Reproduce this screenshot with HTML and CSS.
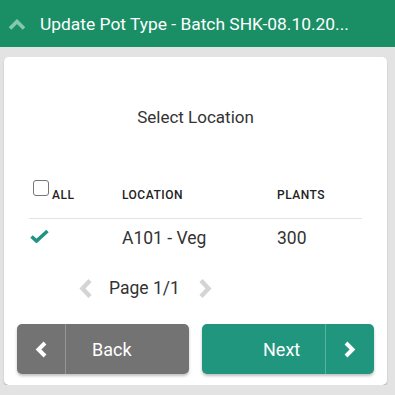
FILE: index.html
```html
<!DOCTYPE html>
<html lang="en">
<head>
    <meta charset="UTF-8">
    <meta name="viewport" content="width=device-width, initial-scale=1.0">
    <title>Update Pot Type</title>
    <link rel="stylesheet" href="styles.css">
</head>
<body>
    <header class="topbar">
        <svg class="topbar-icon" width="18" height="11" viewBox="0 0 18 11">
            <path d="M2 9.5 L9 2.5 L16 9.5" fill="none" stroke="currentColor" stroke-width="3.6"/>
        </svg>
        <h1 class="topbar-title">Update Pot Type - Batch SHK-08.10.20...</h1>
    </header>
    <main class="card">
        <h2 class="card-title">Select Location</h2>
        <table class="loc-table">
            <thead>
                <tr>
                    <th class="col-check"><span class="check-box"></span>ALL</th>
                    <th class="col-loc">LOCATION</th>
                    <th>PLANTS</th>
                </tr>
            </thead>
            <tbody>
                <tr>
                    <td class="col-check">
                        <svg width="19" height="14" viewBox="0 0 19 14">
                            <path d="M1.5 7.5 L6.5 12 L17.5 2" fill="none" stroke="#1f9480" stroke-width="3.6"/>
                        </svg>
                    </td>
                    <td class="col-loc">A101 - Veg</td>
                    <td>300</td>
                </tr>
            </tbody>
        </table>
        <div class="pager">
            <svg width="15" height="19" viewBox="0 0 15 19">
                <path d="M12 1.5 L4.5 9.5 L12 17.5" fill="none" stroke="#d4d4d4" stroke-width="4.4"/>
            </svg>
            <span class="pager-text">Page 1/1</span>
            <svg width="15" height="19" viewBox="0 0 15 19">
                <path d="M3 1.5 L10.5 9.5 L3 17.5" fill="none" stroke="#d4d4d4" stroke-width="4.4"/>
            </svg>
        </div>
        <div class="actions">
            <button type="button" class="btn btn-back">
                <span class="btn-icon">
                    <svg width="14" height="17" viewBox="0 0 14 17">
                        <path d="M11 2 L4.5 8.5 L11 15" fill="none" stroke="#fff" stroke-width="4"/>
                    </svg>
                </span>
                <span class="btn-label">Back</span>
            </button>
            <button type="button" class="btn btn-next">
                <span class="btn-label">Next</span>
                <span class="btn-icon">
                    <svg width="14" height="17" viewBox="0 0 14 17">
                        <path d="M3 2 L9.5 8.5 L3 15" fill="none" stroke="#fff" stroke-width="4"/>
                    </svg>
                </span>
            </button>
        </div>
    </main>
</body>
</html>
```
FILE: styles.css
```css
body {
    margin: 0;
    font-family: Roboto, "Liberation Sans", sans-serif;
    background-color: #e3e3e3;
    color: #333;
}
.topbar {
    display: flex;
    align-items: center;
    height: 47px;
    background-color: #1a8f66;
    color: white;
    padding-left: 8px;
}
.topbar-icon {
    color: #84c9ae;
    margin-right: 14px;
    margin-top: 1px;
}
.topbar-title {
    margin: 0;
    font-size: 17.4px;
    font-weight: 400;
    white-space: nowrap;
}
.card {
    margin: 10px 8px 0 4px;
    background: white;
    border-radius: 5px;
    box-shadow: 0 2px 2px rgba(0, 0, 0, 0.18);
    padding: 48px 13px 11px;
}
.card-title {
    margin: 0 0 51px;
    text-align: center;
    font-size: 17px;
    font-weight: 400;
    line-height: 24px;
}
.loc-table {
    width: calc(100% - 24px);
    margin: 0 12px;
    border-collapse: collapse;
}
.loc-table th {
    font-size: 12px;
    font-weight: 500;
    letter-spacing: 0.5px;
    text-align: left;
    color: #222;
    padding: 0 0 16px;
    vertical-align: bottom;
    border-bottom: 1px solid #e3e3e3;
}
.loc-table td {
    font-size: 17.5px;
    padding: 7px 0 0;
    height: 24px;
}
.col-check {
    width: 89px;
}
.col-loc {
    width: 155px;
}
.loc-table th.col-check {
    padding-left: 4px;
}
.check-box {
    display: inline-block;
    width: 14px;
    height: 14px;
    border: 1px solid #767676;
    border-radius: 3px;
    margin-right: 3px;
    vertical-align: 3px;
}
.loc-table td.col-check svg {
    display: block;
    margin-top: -4px;
    margin-left: 1px;
}
.pager {
    display: flex;
    align-items: center;
    margin: 28px 0 0 61px;
    gap: 16px;
}
.pager-text {
    font-size: 17.5px;
    margin-right: 2px;
}
.actions {
    display: flex;
    gap: 13px;
    margin-top: 26px;
}
.btn {
    flex: 1;
    display: flex;
    align-items: stretch;
    height: 50px;
    padding: 0;
    border: none;
    border-radius: 5px;
    color: white;
    font-family: inherit;
    font-size: 18px;
    cursor: pointer;
    box-shadow: 0 2px 3px rgba(0, 0, 0, 0.25);
}
.btn-back {
    background-color: #737373;
}
.btn-next {
    background-color: #21967f;
}
.btn-icon {
    width: 48px;
    display: flex;
    align-items: center;
    justify-content: center;
}
.btn-back .btn-icon {
    border-right: 1px solid rgba(255, 255, 255, 0.25);
}
.btn-next .btn-icon {
    border-left: 1px solid rgba(255, 255, 255, 0.25);
}
.btn-label {
    flex: 1;
    display: flex;
    align-items: center;
}
.btn-back .btn-label {
    padding-left: 26px;
}
.btn-next .btn-label {
    padding-left: 61px;
}
```
